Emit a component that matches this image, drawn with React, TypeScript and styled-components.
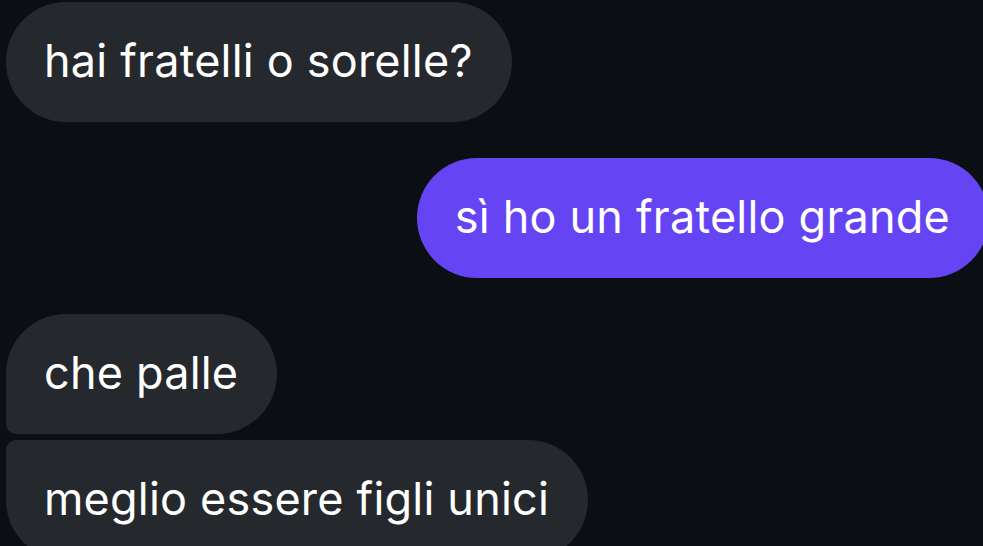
import React from "react";
import styled, { createGlobalStyle } from "styled-components";

const Global = createGlobalStyle`
  html, body { margin: 0; padding: 0; background: #0b0f14; }
  body { overflow: hidden; }
`;

const Screen = styled.div`
  width: 983px;
  height: 546px;
  overflow: hidden;
  background: #0b0f14;
  font-family: "Inter", "Roboto", sans-serif;
  display: flex;
  flex-direction: column;
  padding: 2px 0 0 6px;
  box-sizing: border-box;
`;

const Group = styled.div<{ $mine?: boolean }>`
  display: flex;
  flex-direction: column;
  align-items: ${(p) => (p.$mine ? "flex-end" : "flex-start")};
  gap: 6px;
  margin-bottom: 36px;
  margin-right: ${(p) => (p.$mine ? "-6px" : "0")};
`;

type Pos = "single" | "first" | "last";

const Bubble = styled.div<{ $mine?: boolean; $pos?: Pos }>`
  box-sizing: border-box;
  height: 120px;
  display: flex;
  align-items: center;
  padding: 0 39px 4px 38px;
  font-size: 45px;
  letter-spacing: 0.2px;
  white-space: nowrap;
  color: #ffffff;
  background: ${(p) => (p.$mine ? "#6545f3" : "#25292e")};
  border-radius: ${(p) =>
    p.$pos === "first"
      ? "60px 60px 60px 10px"
      : p.$pos === "last"
      ? "10px 60px 60px 60px"
      : "60px"};
`;

export default function App() {
  return (
    <>
      <Global />
      <Screen>
        <Group>
          <Bubble $pos="single">hai fratelli o sorelle?</Bubble>
        </Group>
        <Group $mine>
          <Bubble $mine $pos="single">sì ho un fratello grande</Bubble>
        </Group>
        <Group>
          <Bubble $pos="first">che palle</Bubble>
          <Bubble $pos="last">meglio essere figli unici</Bubble>
        </Group>
      </Screen>
    </>
  );
}
